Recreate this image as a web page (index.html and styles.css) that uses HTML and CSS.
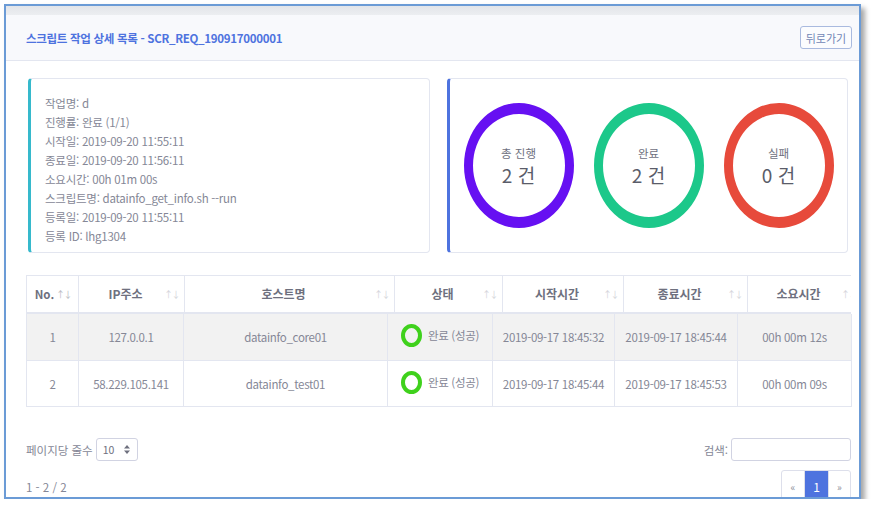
FILE: index.html
```html
<!DOCTYPE html>
<html lang="ko">
<head>
<meta charset="utf-8">
<title>스크립트 작업 상세 목록</title>
<link rel="stylesheet" href="styles.css">
</head>
<body>
<div class="frame">
  <div class="topstrip"></div>
  <div class="header">
    <h2 class="title">스크립트 작업 상세 목록 - SCR_REQ_190917000001</h2>
    <button class="back" type="button">뒤로가기</button>
  </div>
  <div class="content">
    <div class="cards">
      <div class="card info">
        <div>작업명: d</div>
        <div>진행률: 완료 (1/1)</div>
        <div>시작일: 2019-09-20 11:55:11</div>
        <div>종료일: 2019-09-20 11:56:11</div>
        <div>소요시간: 00h 01m 00s</div>
        <div>스크립트명: datainfo_get_info.sh --run</div>
        <div>등록일: 2019-09-20 11:55:11</div>
        <div>등록 ID: lhg1304</div>
      </div>
      <div class="card stats">
        <div class="ring ring-total">
          <div class="ring-label">총 진행</div>
          <div class="ring-num">2 건</div>
        </div>
        <div class="ring ring-done">
          <div class="ring-label">완료</div>
          <div class="ring-num">2 건</div>
        </div>
        <div class="ring ring-fail">
          <div class="ring-label">실패</div>
          <div class="ring-num">0 건</div>
        </div>
      </div>
    </div>

    <div class="dt">
      <div class="thead-wrap">
        <table class="thead">
          <tr>
            <th class="h1">No.<span class="sort first">↑↓</span></th>
            <th class="h2">IP주소<span class="sort">↑↓</span></th>
            <th class="h3">호스트명<span class="sort">↑↓</span></th>
            <th class="h4">상태<span class="sort">↑↓</span></th>
            <th class="h5">시작시간<span class="sort">↑↓</span></th>
            <th class="h6">종료시간<span class="sort">↑↓</span></th>
            <th class="h7">소요시간<span class="sort">↑↓</span></th>
          </tr>
        </table>
      </div>
      <table class="tbody">
        <tr class="odd">
          <td class="b1">1</td>
          <td class="b2">127.0.0.1</td>
          <td class="b3">datainfo_core01</td>
          <td class="b4"><span class="status"><span class="dot"></span>완료 (성공)</span></td>
          <td class="b5">2019-09-17 18:45:32</td>
          <td class="b6">2019-09-17 18:45:44</td>
          <td class="b7">00h 00m 12s</td>
        </tr>
        <tr class="even">
          <td class="b1">2</td>
          <td class="b2">58.229.105.141</td>
          <td class="b3">datainfo_test01</td>
          <td class="b4"><span class="status"><span class="dot"></span>완료 (성공)</span></td>
          <td class="b5">2019-09-17 18:45:44</td>
          <td class="b6">2019-09-17 18:45:53</td>
          <td class="b7">00h 00m 09s</td>
        </tr>
      </table>
    </div>

    <div class="controls">
      <div class="len">페이지당 줄수
        <span class="select">10
          <svg class="updown" width="6" height="9" viewBox="0 0 6 9"><polygon points="3,0 6,3.5 0,3.5" fill="#6e707e"/><polygon points="0,5.5 6,5.5 3,9" fill="#6e707e"/></svg>
        </span>
      </div>
      <div class="search">검색: <input class="search-input" type="text"></div>
    </div>

    <div class="footer">
      <div class="info-count">1 - 2 / 2</div>
      <div class="pager">
        <span class="pg prev">«</span>
        <span class="pg active">1</span>
        <span class="pg next">»</span>
      </div>
    </div>
  </div>
</div>
</body>
</html>
```

FILE: styles.css
```css
html, body {
  margin: 0;
  padding: 0;
  background: #ffffff;
}
body {
  font-family: "Noto Sans CJK KR", "Noto Sans", sans-serif;
  color: #858796;
}
.frame {
  margin: 4px 0 0 4px;
  width: 857px;
  height: 495px;
  box-sizing: border-box;
  border: 2px solid #6b9bd6;
  box-shadow: 4px 4px 5px rgba(0, 0, 0, 0.35);
  overflow: hidden;
  background: #fff;
}
.topstrip {
  height: 9px;
  background: linear-gradient(#e3e5e9, #eceef1);
}
.header {
  height: 45px;
  background: #f8f9fc;
  border-bottom: 1px solid #e3e6f0;
  display: flex;
  align-items: center;
  justify-content: space-between;
  padding: 0 7px 0 20px;
}
.title {
  margin: 0;
  font-size: 11.5px;
  font-weight: 700;
  color: #4e73df;
  letter-spacing: -0.3px;
}
.back {
  width: 52px;
  height: 23px;
  padding: 0;
  border: 1px solid #a9badf;
  border-radius: 3px;
  background: #fbfcfe;
  color: #7186b5;
  font-family: inherit;
  font-size: 11px;
}
.content {
  padding: 17px 11px 0 20px;
}
.cards {
  display: flex;
  gap: 17px;
  margin-left: 2px;
}
.card {
  height: 175px;
  box-sizing: border-box;
  border: 1px solid #e3e6f0;
  border-radius: 4px;
  background: #fff;
}
.info {
  width: 402px;
  border-left: 3px solid #36b9cc;
  padding: 15px 14px;
  font-size: 11.5px;
  line-height: 19px;
  letter-spacing: -0.25px;
  color: #858796;
}
.stats {
  width: 401px;
  border-left: 3px solid #4e73df;
  display: flex;
  align-items: center;
  justify-content: center;
  gap: 20px;
}
.ring {
  width: 110px;
  height: 125px;
  box-sizing: border-box;
  border-style: solid;
  border-width: 11px 9px;
  border-radius: 50%;
  display: flex;
  flex-direction: column;
  align-items: center;
  justify-content: center;
  gap: 2px;
}
.ring-total { border-color: #6610f2; }
.ring-done { border-color: #1cc88a; }
.ring-fail { border-color: #e74a3b; }
.ring-label {
  font-size: 11.5px;
  line-height: 16px;
  color: #6e707e;
}
.ring-num {
  font-size: 19px;
  line-height: 24px;
  color: #5a5c69;
}

.dt {
  margin-top: 22px;
  width: 825px;
}
.thead-wrap {
  width: 825px;
  overflow: hidden;
}
table {
  border-collapse: collapse;
  table-layout: fixed;
}
.thead { width: 835px; }
.tbody { width: 825px; }
.thead th,
.tbody td {
  box-sizing: border-box;
}
.thead th {
  position: relative;
  height: 37px;
  padding: 0 12px 0 0;
  border: 1px solid #e3e6f0;
  border-bottom-width: 2px;
  font-size: 12px;
  font-weight: 700;
  color: #6e707e;
  text-align: center;
  white-space: nowrap;
  overflow: hidden;
}
.thead th.h1 {
  padding-right: 16px;
  font-size: 11.5px;
}
.sort {
  position: absolute;
  right: 5px;
  top: 50%;
  transform: translateY(-50%);
  font-size: 9px;
  font-weight: 400;
  letter-spacing: -1.5px;
  color: #d3d4da;
}
.sort.first { color: #b9bac2; right: 7px; }
.h1 { width: 52px; }
.h2 { width: 106px; }
.h3 { width: 210px; }
.h4 { width: 108px; }
.h5 { width: 121px; }
.h6 { width: 124px; }
.h7 { width: 114px; }
.b1 { width: 52px; }
.b2 { width: 105px; }
.b3 { width: 204px; }
.b4 { width: 105px; }
.b5 { width: 122px; }
.b6 { width: 123px; }
.b7 { width: 114px; }
.tbody td {
  height: 46px;
  padding: 0;
  border: 1px solid #e3e6f0;
  border-top: none;
  font-size: 11.5px;
  letter-spacing: -0.3px;
  color: #858796;
  text-align: center;
  white-space: nowrap;
  overflow: hidden;
}
.tbody tr.odd td {
  height: 47px;
  background: #f2f2f2;
}
.status {
  display: inline-flex;
  align-items: center;
  gap: 6px;
}
.dot {
  display: inline-block;
  width: 21px;
  height: 23px;
  box-sizing: border-box;
  border: 4px solid #3fd11c;
  border-radius: 50%;
}

.controls {
  margin-top: 31px;
  width: 825px;
  height: 23px;
  display: flex;
  align-items: center;
  justify-content: space-between;
  font-size: 11.5px;
  color: #858796;
}
.len, .search {
  display: flex;
  align-items: center;
}
.select {
  margin-left: 3px;
  width: 42px;
  height: 23px;
  box-sizing: border-box;
  border: 1px solid #d1d3e2;
  border-radius: 3px;
  display: flex;
  align-items: center;
  justify-content: space-between;
  padding: 0 7px 0 6px;
  font-size: 10.5px;
  color: #6e707e;
}
.search-input {
  margin: 0 0 0 3px;
  width: 120px;
  height: 23px;
  box-sizing: border-box;
  border: 1px solid #d1d3e2;
  border-radius: 3px;
  padding: 0 6px;
}
.footer {
  margin-top: 9px;
  width: 825px;
  display: flex;
  justify-content: space-between;
  align-items: flex-start;
  font-size: 11.5px;
  color: #858796;
}
.info-count {
  padding-top: 8px;
  line-height: 19px;
}
.pager {
  display: flex;
  border: 1px solid #dddfeb;
  border-radius: 3px;
  overflow: hidden;
}
.pg {
  width: 23px;
  height: 30px;
  display: flex;
  align-items: center;
  justify-content: center;
  font-size: 10px;
  color: #8f919c;
}
.pg.prev { border-right: 1px solid #dddfeb; width: 22px; }
.pg.next { border-left: 1px solid #dddfeb; width: 21px; }
.pg.active {
  background: #4e73df;
  color: #fff;
  font-size: 12px;
}
```
